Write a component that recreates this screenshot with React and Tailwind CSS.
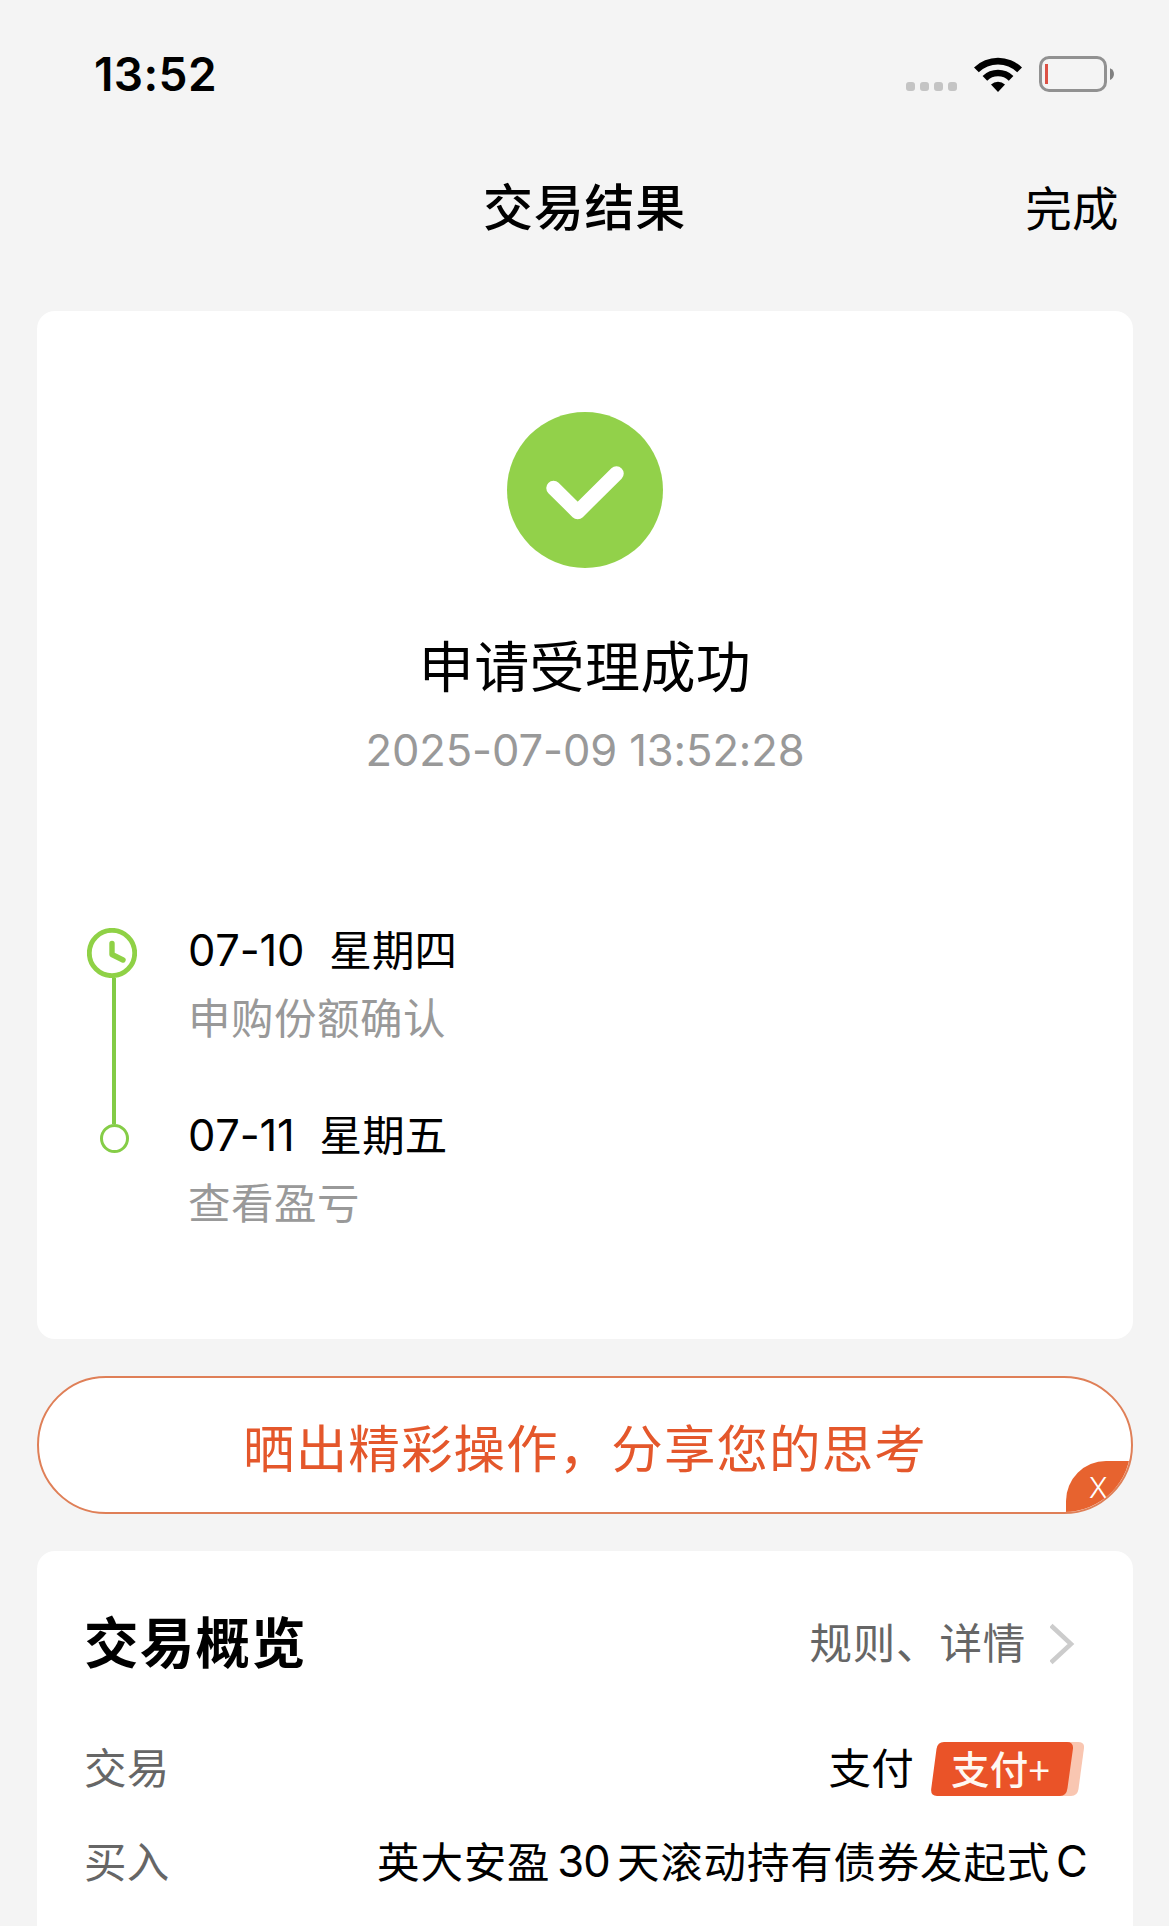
import clsx from 'clsx'

const steps = [
  { date: '07-10', weekday: '星期四', label: '申购份额确认' },
  { date: '07-11', weekday: '星期五', label: '查看盈亏' },
]

function WifiIcon() {
  return (
    <svg width="48" height="37" viewBox="0 0 48 37">
      <path d="M0 11.5A34.5 34.5 0 0 1 48 11.5L43.2 16.3A27.6 27.6 0 0 0 4.8 16.3Z" />
      <path d="M8.6 20A21.8 21.8 0 0 1 39.4 20L34.8 24.7A15.3 15.3 0 0 0 13.2 24.7Z" />
      <path d="M17 28.6A10.2 10.2 0 0 1 31 28.6L24 36Z" />
    </svg>
  )
}

function BatteryIcon() {
  return (
    <svg width="76" height="37" viewBox="0 0 76 37" fill="none">
      <rect x="1.5" y="1.5" width="65" height="33" rx="8.5" stroke="#919191" strokeWidth="3" />
      <rect x="6" y="8" width="3" height="20" fill="#dc5145" />
      <path d="M71 12.2C76.3 14 76.3 22.2 71 24Z" fill="#808080" />
    </svg>
  )
}

function StatusBar() {
  return (
    <div className="flex h-[149px] items-center justify-between pr-[54px] pl-[94px]">
      <span className="mb-[1px] text-[46px] leading-none font-semibold tracking-[0.4px]">13:52</span>
      <div className="flex items-end">
        <div className="mb-[2px] flex gap-[5px]">
          {[0, 1, 2, 3].map((i) => (
            <span key={i} className="size-[9px] rounded-[3px] bg-[#c4c4c4]" />
          ))}
        </div>
        <div className="ml-[17px]">
          <WifiIcon />
        </div>
        <div className="ml-[17px]">
          <BatteryIcon />
        </div>
      </div>
    </div>
  )
}

function NavBar() {
  return (
    <div className="grid h-[114px] grid-cols-3 items-center pr-[50px] pl-[50px]">
      <span />
      <h1 className="mt-[4px] text-center text-[50px] font-medium tracking-[0.8px]">交易结果</h1>
      <button className="mt-[8px] text-right text-[46.5px] tracking-[0.4px]">完成</button>
    </div>
  )
}

function Timeline() {
  return (
    <div className="mt-[134px] flex">
      <div className="mt-[13px] ml-[50px] w-[50px]">
        <svg width="50" height="50" viewBox="0 0 50 50" fill="none" stroke="#8fd146" strokeLinecap="round" strokeLinejoin="round">
          <circle cx="25" cy="25" r="22.7" strokeWidth="4.8" />
          <path d="M25 15.5V26.5L36 32" strokeWidth="5.4" />
        </svg>
        <div className="ml-[25px] h-[146px] w-[4px] bg-[#82cb45]" />
        <div className="ml-[13px] size-[29px] rounded-full border-[3px] border-[#85cd47]" />
      </div>
      <div className="mt-[1px] ml-[51px] flex flex-col gap-[49px]">
        {steps.map((step) => (
          <div key={step.date} className="leading-[68px]">
            <p className="flex">
              <span className="text-[43.5px] tracking-[-0.2px] [font-kerning:none]">{step.date}</span>
              <span className="mt-[1px] -mb-[1px] ml-[25px] text-[42.5px] tracking-[0.2px]">{step.weekday}</span>
            </p>
            <p className="mt-[1px] -mb-[1px] text-[42.5px] tracking-[0.5px] text-[#999]">{step.label}</p>
          </div>
        ))}
      </div>
    </div>
  )
}

function ResultCard() {
  return (
    <section className="h-[1028px] rounded-[18px] bg-white pt-[101px]">
      <svg className="mx-auto" width="156" height="156" viewBox="0 0 156 156" fill="none">
        <circle cx="78" cy="78" r="78" fill="#92d14a" />
        <path d="M46.5 76L70.7 100L109.5 61.5" stroke="#fff" strokeWidth="14.5" strokeLinecap="round" strokeLinejoin="round" />
      </svg>
      <h2 className="mt-[63px] text-center text-[55px] leading-[72px] tracking-[0.4px]">申请受理成功</h2>
      <p className="mt-[17px] text-center text-[43.5px] leading-[61px] tracking-[-0.1px] text-[#999]">2025-07-09 13:52:28</p>
      <Timeline />
    </section>
  )
}

function ShareBanner() {
  return (
    <div className="relative mt-[37px] flex h-[138px] items-center justify-center overflow-hidden rounded-full border-2 border-[#df7f57] bg-white">
      <span className="mt-[9px] text-[51.5px] tracking-[1.1px] text-[#e4572b]">晒出精彩操作，分享您的思考</span>
      <button className="absolute right-0 bottom-0 h-[51px] w-[65px] rounded-tl-[40px] bg-[#e7632f] pl-[23px] text-left text-[28px] leading-[54px] font-light text-white">
        X
      </button>
    </div>
  )
}

function PayBadge() {
  return (
    <div className="relative mt-[1px] mr-[3px] ml-[17px] h-[54px] w-[153px]">
      <svg className="absolute inset-0" width="153" height="54" viewBox="0 0 153 54">
        <path d="M130 0H147Q153.700 0 153 6L147.500 47Q146.500 54 140 54H125Z" fill="#f9c6b1" />
        <path d="M13 0H136Q142.500 0 142 6.500L136.500 46Q135.500 54 129 54H6Q-.5 54 .2 47L5.500 7Q6.500 0 13 0Z" fill="#ea5328" />
      </svg>
      <span className="relative flex h-full items-center pt-[4px] pl-[20px] text-[38.5px] font-medium tracking-[0.2px] text-[#fff8f2]">
        支付
        <span className="-mt-[3px] font-['Noto_Sans_CJK_SC'] font-normal">+</span>
      </span>
    </div>
  )
}

function Row({ label, className, children }) {
  return (
    <div className={clsx('flex h-[94px] items-center justify-between text-[42.5px] tracking-[0.8px]', className)}>
      <span className="mt-[2px] tracking-[0.2px] text-[#666]">{label}</span>
      <div className="flex items-center">{children}</div>
    </div>
  )
}

function OverviewCard() {
  return (
    <section className="mt-[37px] h-[420px] rounded-t-[18px] bg-white pt-[55px] pr-[46px] pl-[47px]">
      <div className="flex h-[72px] items-center justify-between pr-[11px]">
        <h2 className="mt-[4px] text-[54.5px] font-bold tracking-[1.2px]">交易概览</h2>
        <div className="mt-[3px] flex items-center text-[42.5px] tracking-[0.8px] text-[#666]">
          <span className="mt-[1px]">规则、详情</span>
          <svg className="ml-[24px]" width="26" height="42" viewBox="0 0 26 42" fill="none">
            <path d="M1 2.500L21 21L1 39.500" stroke="#ccc" strokeWidth="4.5" />
          </svg>
        </div>
      </div>
      <Row label="交易" className="mt-[43px]">
        <span className="mt-[2px] tracking-[0.2px]">支付</span>
        <PayBadge />
      </Row>
      <Row label="买入">
        <span className="mt-[2px]">英大安盈</span>
        <span className="mr-[7px] ml-[7px] text-[43.5px] tracking-[-0.8px]">30</span>
        <span className="mt-[2px]">天滚动持有债券发起式</span>
        <span className="ml-[6px] text-[43.5px] tracking-[-0.8px]">C</span>
      </Row>
    </section>
  )
}

export default function App() {
  return (
    <main className="h-[1926px] w-[1169px] overflow-hidden bg-[#f4f4f4] font-['Inter','Noto_Sans_CJK_SC',sans-serif] text-black">
      <StatusBar />
      <NavBar />
      <div className="pt-[48px] pr-[36px] pl-[37px]">
        <ResultCard />
        <ShareBanner />
        <OverviewCard />
      </div>
    </main>
  )
}
